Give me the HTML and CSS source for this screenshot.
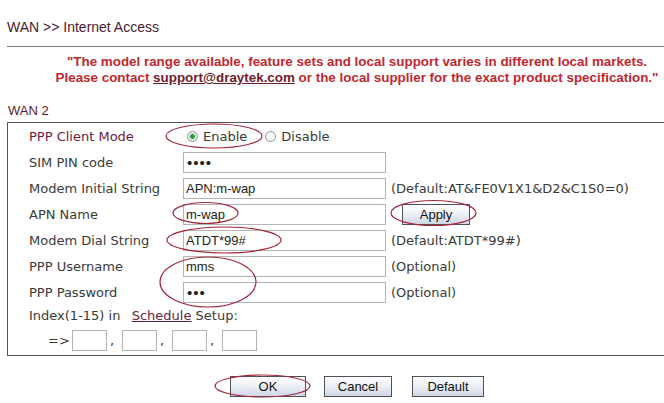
FILE: index.html
```html
<!DOCTYPE html>
<html lang="en">
<head>
  <meta charset="UTF-8">
  <title>WAN &gt;&gt; Internet Access</title>
  <link rel="stylesheet" href="styles.css">
</head>
<body>
  <div class="page">
    <div class="title">WAN &gt;&gt; Internet Access</div>

    <div class="notice">
      <p>"The model range available, feature sets and local support varies in different local markets.</p>
      <p>Please contact <a href="#">support@draytek.com</a> or the local supplier for the exact product specification."</p>
    </div>

    <div class="sect">WAN 2</div>

    <div class="box">
      <div class="row">
        <span class="lbl lbl-mode">PPP Client Mode</span>
        <span class="radios">
          <label class="rad"><input type="radio" name="mode" checked>Enable</label>
          <label class="rad"><input type="radio" name="mode">Disable</label>
        </span>
      </div>
      <div class="row">
        <span class="lbl">SIM PIN code</span>
        <input class="fld pw" type="password" value="1234">
      </div>
      <div class="row">
        <span class="lbl">Modem Initial String</span>
        <input class="fld" type="text" value="APN:m-wap">
        <span class="note">(Default:AT&amp;FE0V1X1&amp;D2&amp;C1S0=0)</span>
      </div>
      <div class="row">
        <span class="lbl">APN Name</span>
        <input class="fld" type="text" value="m-wap">
        <button class="btn btn-apply">Apply</button>
      </div>
      <div class="row">
        <span class="lbl">Modem Dial String</span>
        <input class="fld" type="text" value="ATDT*99#">
        <span class="note">(Default:ATDT*99#)</span>
      </div>
      <div class="row">
        <span class="lbl">PPP Username</span>
        <input class="fld" type="text" value="mms">
        <span class="note">(Optional)</span>
      </div>
      <div class="row">
        <span class="lbl">PPP Password</span>
        <input class="fld pw" type="password" value="123">
        <span class="note">(Optional)</span>
      </div>
      <div class="row-idx">Index(1-15) in&nbsp; <a href="#">Schedule</a> Setup:</div>
      <div class="row-sched">
        <span class="arrow">=&gt;</span>
        <input class="idx" type="text"><span class="comma">,</span>
        <input class="idx" type="text"><span class="comma">,</span>
        <input class="idx" type="text"><span class="comma">,</span>
        <input class="idx" type="text">
      </div>
    </div>

    <div class="actions">
      <button class="btn btn-ok">OK</button>
      <button class="btn btn-cancel">Cancel</button>
      <button class="btn btn-default">Default</button>
    </div>

    <!-- hand drawn marks over the form -->
    <svg class="marks" width="664" height="403" viewBox="0 0 664 403">
      <ellipse cx="214" cy="136" rx="48" ry="12"/>
      <ellipse cx="205.5" cy="213" rx="32.5" ry="10.5"/>
      <ellipse cx="433.5" cy="213" rx="42.5" ry="12.5"/>
      <ellipse cx="224" cy="240" rx="57" ry="13"/>
      <ellipse cx="208" cy="282" rx="48" ry="25"/>
      <ellipse cx="262.5" cy="386" rx="47.5" ry="11"/>
    </svg>
  </div>
</body>
</html>
```

FILE: styles.css
```css
body {
  margin:0; background:#fff;
  font-family:"DejaVu Sans", Verdana, sans-serif;
  font-size:13px; color:#3a3a3a;
}
.page {position:relative; width:664px; height:403px; overflow:hidden;}

.title {
  margin-left:7px; padding:19px 0 11px 0;
  font:14px/16px "Liberation Sans", Arial, sans-serif;
  color:#4a1a2e;
  border-bottom:1px solid #7a7a7a;
}
.notice {
  margin-top:7px; padding-left:50px;
  text-align:center; white-space:nowrap;
  font:bold 13.4px/16px "Liberation Sans", Arial, sans-serif;
  color:#c0282f;
}
.notice p {margin:0;}
.notice a {color:#6e1c2a;}

.sect {
  margin:17px 0 0 8px;
  font:13px/16px "Liberation Sans", Arial, sans-serif;
  color:#5a1a2e;
}

.box {
  margin:3px 0 0 7px;
  border:1px solid #555; border-right:none;
  padding:0 0 2px 21px;
}
.row {
  display:grid; grid-template-columns:154px 203px auto;
  align-items:center; height:26px;
}
.lbl {white-space:nowrap;}
.lbl-mode {color:#6b1d45;}
.radios {grid-column:2 / 4; display:flex; align-items:center;}
.rad {display:flex; align-items:center; white-space:nowrap;}
.rad input {
  appearance:none; -webkit-appearance:none;
  width:11px; height:11px; margin:0 5px 0 0;
  border:1px solid #8a8f98; border-radius:50%;
  background:#fbfbfb;
}
.rad:first-child {margin:0 18px 0 4px;}
.rad input:checked {background:radial-gradient(circle, #2f9a3a 0 2px, #bfe6c2 2.5px 3.5px, #fbfbfb 4px);}

.fld {
  box-sizing:border-box; width:203px; height:21px;
  margin:0; padding:0 2px;
  border:1px solid #b4b4b4; border-radius:0;
  font:13px "Liberation Sans", Arial, sans-serif; color:#222;
  outline:none;
}
.fld.pw {font-size:15px; letter-spacing:1px; padding-left:3px;}
.note {margin-left:5px; white-space:nowrap;}

.btn {
  box-sizing:border-box; height:21px; padding:0;
  border:1px solid #4e5258; border-radius:0;
  background:linear-gradient(#ffffff, #eef1f7 45%, #cfd6e6);
  font:13px "Liberation Sans", Arial, sans-serif; color:#111;
}
.btn-apply {width:68px; margin-left:16px; justify-self:start;}

.row-idx {height:22px; line-height:22px; white-space:nowrap;}
.row-idx a {color:#6b1d45; margin-left:3px;}
.row-sched {display:flex; align-items:center; height:26px; padding-left:19px;}
.arrow {width:24px;}
.idx {
  box-sizing:border-box; width:35px; height:21px; margin:0; padding:0;
  border:1px solid #b4b4b4; border-radius:0;
}
.comma {width:15px; padding-left:3px; box-sizing:border-box;}

.actions {
  display:flex; justify-content:center; gap:18px;
  margin-top:20px; padding-left:50px;
}
.btn-ok {width:76px;}
.btn-cancel {width:68px; margin-right:2px;}
.btn-default {width:72px;}

.marks {position:absolute; left:0; top:0; pointer-events:none;}
.marks ellipse {fill:none; stroke:#a3283d; stroke-width:1.2;}
```
